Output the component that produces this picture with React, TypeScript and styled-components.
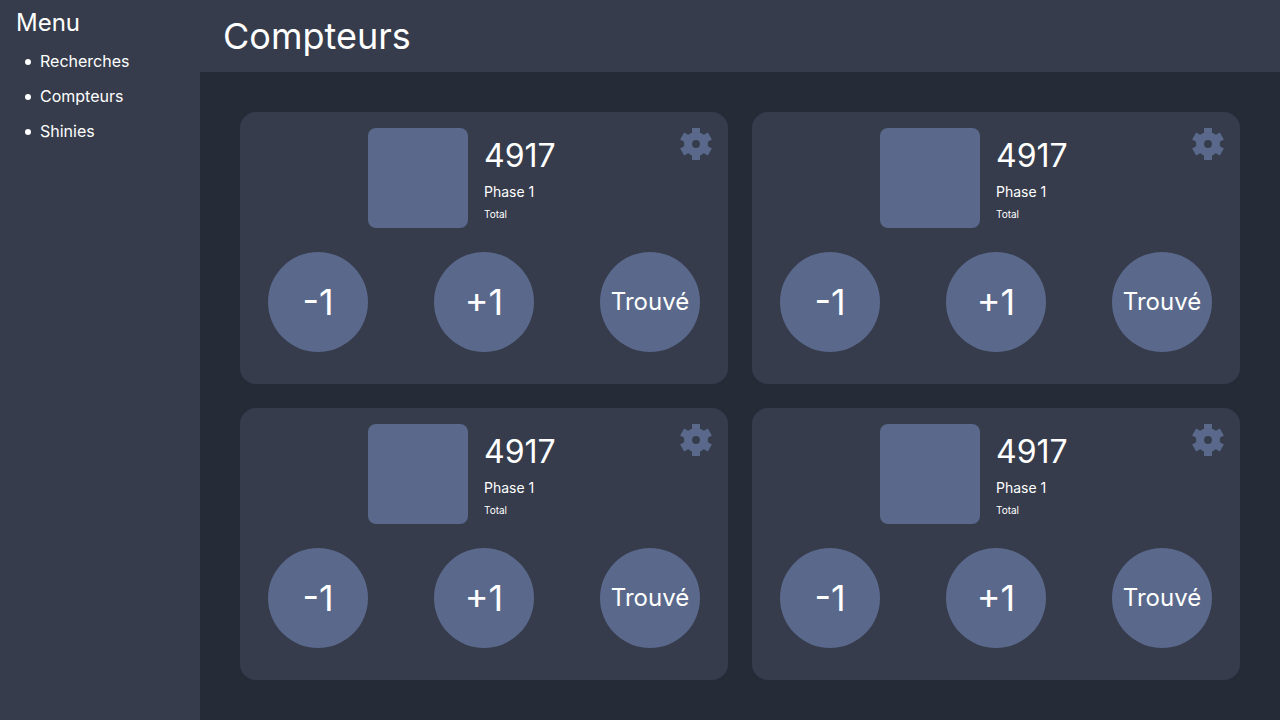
import React, { useState } from "react";
import styled, { createGlobalStyle } from "styled-components";

const colors = {
  background: "#262b38",
  surface: "#363c4b",
  accent: "#5a698b",
  text: "#ffffff",
};

const GlobalStyle = createGlobalStyle`
  *, *::before, *::after { box-sizing: border-box; }
  body {
    margin: 0;
    background: ${colors.background};
    color: ${colors.text};
    font-family: Inter, "Liberation Sans", sans-serif;
    font-size: 16px;
    line-height: 19px;
  }
`;

const Layout = styled.div`
  display: grid;
  grid-template-columns: 200px 1fr;
  min-height: 100vh;
`;

const Sidebar = styled.nav`
  padding: 8px 16px;
  background: ${colors.surface};
`;

const MenuTitle = styled.h2`
  margin: 0 0 15px;
  font-size: 24px;
  font-weight: 400;
  line-height: 29px;
`;

const MenuList = styled.ul`
  display: flex;
  flex-direction: column;
  gap: 16px;
  margin: 0;
  padding: 0 0 0 9px;
  list-style: none;
`;

const MenuItem = styled.li`
  display: flex;
  align-items: center;
  gap: 9px;

  &::before {
    content: "";
    width: 6px;
    height: 6px;
    margin-top: 1px;
    border-radius: 50%;
    background: currentColor;
  }
`;

const MenuLink = styled.a`
  color: inherit;
  text-decoration: none;
`;

const Header = styled.header`
  display: flex;
  align-items: center;
  height: 72px;
  padding: 0 23px;
  background: ${colors.surface};
`;

const PageTitle = styled.h1`
  margin: 0;
  font-size: 36px;
  font-weight: 400;
  line-height: 44px;
`;

const CounterGrid = styled.main`
  display: grid;
  grid-template-columns: repeat(2, 1fr);
  gap: 24px;
  padding: 40px;
`;

const Card = styled.article`
  display: flex;
  flex-direction: column;
  gap: 24px;
  padding: 16px 16px 32px;
  border-radius: 16px;
  background: ${colors.surface};
`;

const CardTop = styled.div`
  display: grid;
  grid-template-columns: 1fr 1fr;
`;

const Sprite = styled.div`
  justify-self: end;
  width: 100px;
  height: 100px;
  margin-right: 16px;
  border-radius: 8px;
  background: ${colors.accent};
`;

const Details = styled.div`
  display: flex;
  justify-content: space-between;
`;

const Stats = styled.div`
  display: flex;
  flex-direction: column;
  justify-content: center;
  gap: 8px;
`;

const Count = styled.span`
  font-size: 32px;
  line-height: 39px;
`;

const Phase = styled.span`
  font-size: 14px;
  line-height: 17px;
`;

const Total = styled.span`
  font-size: 10px;
  line-height: 12px;
`;

const SettingsButton = styled.button`
  display: block;
  align-self: flex-start;
  width: 32px;
  height: 32px;
  padding: 0;
  border: 0;
  background: none;
  color: ${colors.accent};
  cursor: pointer;

  svg { display: block; }
`;

const Actions = styled.div`
  display: flex;
  justify-content: space-between;
  padding: 0 12px;
`;

const RoundButton = styled.button`
  width: 100px;
  height: 100px;
  padding: 0;
  border: 0;
  border-radius: 50%;
  background: ${colors.accent};
  color: inherit;
  font-family: inherit;
  font-size: 24px;
  line-height: 28px;
  cursor: pointer;
`;

const StepButton = styled(RoundButton)`
  font-size: 36px;
  line-height: 44px;
`;

function GearIcon() {
  return (
    <svg width="32" height="32" viewBox="-16 -16 32 32" fill="currentColor" aria-hidden="true">
      <path fillRule="evenodd" d="M0-12A12 12 0 1 1 0 12A12 12 0 1 1 0-12ZM0-4A4 4 0 1 0 0 4A4 4 0 1 0 0-4Z" />
      {[0, 60, 120, 180, 240, 300].map((angle) => (
        <rect key={angle} x="-4" y="-16" width="8" height="8" transform={`rotate(${angle})`} />
      ))}
    </svg>
  );
}

function CounterCard() {
  const [count, setCount] = useState(4917);
  return (
    <Card>
      <CardTop>
        <Sprite />
        <Details>
          <Stats>
            <Count>{count}</Count>
            <Phase>Phase 1</Phase>
            <Total>Total</Total>
          </Stats>
          <SettingsButton type="button" aria-label="Paramètres">
            <GearIcon />
          </SettingsButton>
        </Details>
      </CardTop>
      <Actions>
        <StepButton type="button" onClick={() => setCount(count - 1)}>-1</StepButton>
        <StepButton type="button" onClick={() => setCount(count + 1)}>+1</StepButton>
        <RoundButton type="button">Trouvé</RoundButton>
      </Actions>
    </Card>
  );
}

const menu = ["Recherches", "Compteurs", "Shinies"];
const counters = [1, 2, 3, 4];

export default function App() {
  return (
    <>
      <GlobalStyle />
      <Layout>
        <Sidebar>
          <MenuTitle>Menu</MenuTitle>
          <MenuList>
            {menu.map((label) => (
              <MenuItem key={label}>
                <MenuLink href={`#${label.toLowerCase()}`}>{label}</MenuLink>
              </MenuItem>
            ))}
          </MenuList>
        </Sidebar>
        <div>
          <Header>
            <PageTitle>Compteurs</PageTitle>
          </Header>
          <CounterGrid>
            {counters.map((id) => (
              <CounterCard key={id} />
            ))}
          </CounterGrid>
        </div>
      </Layout>
    </>
  );
}
